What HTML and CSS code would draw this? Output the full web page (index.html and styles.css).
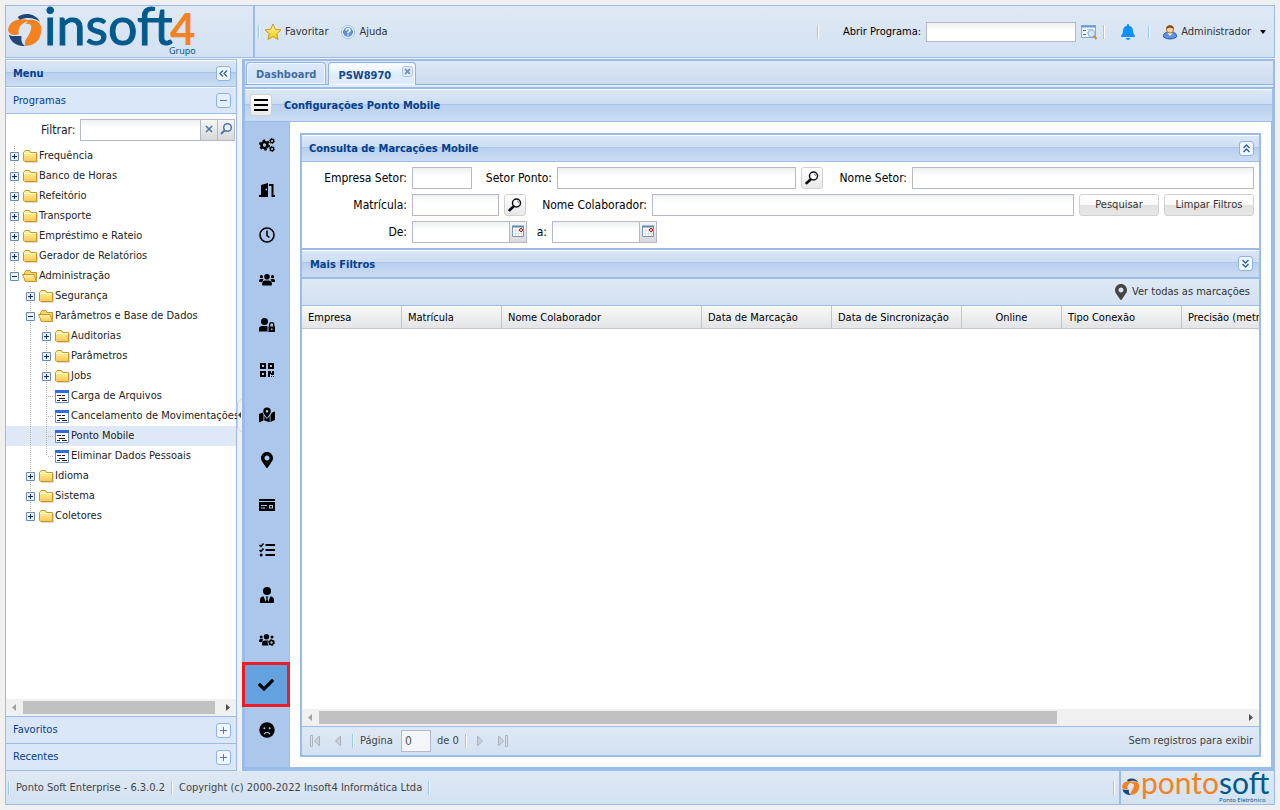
FILE: index.html
```html
<!DOCTYPE html>
<html lang="pt-BR">
<head>
<meta charset="utf-8">
<title>Ponto Soft Enterprise</title>
<link rel="stylesheet" href="styles.css">
</head>
<body>
<svg class="defs" aria-hidden="true">
  <defs>
    <linearGradient id="g-folder" x1="0" y1="0" x2="0" y2="1"><stop offset="0" stop-color="#fff6a8"/><stop offset="1" stop-color="#fbc94f"/></linearGradient>
    <linearGradient id="g-star" x1="0" y1="0" x2="0" y2="1"><stop offset="0" stop-color="#fffbb0"/><stop offset="1" stop-color="#f5c800"/></linearGradient>
    <symbol id="folder" viewBox="1 0 16 16"><path d="M1.500 12.500V4.500L3 2.500H7.500L8.500 4.500H14.500V13.500H2.500Z" fill="url(#g-folder)" stroke="#c8962a"/><path d="M2 5.500H14" stroke="#fffbd0"/><path d="M3 14.500H15.500V5.500" fill="none" stroke="#c9c4b4" stroke-width=".6"/></symbol>
    <symbol id="folder-open" viewBox="1 0 16 16"><path d="M2.500 12.500V4.500L4 2.500H8L9 4.500H14.500V13.500" fill="#f5d469" stroke="#c8962a"/><path d="M.500 6.500H12L14.500 13.500H3.500Z" fill="url(#g-folder)" stroke="#c8962a"/></symbol>
    <symbol id="leaf" viewBox="1 0 16 16"><path d="M1.500 2.500H14.500V14.500H1.500Z" fill="#fff" stroke="#6a8fc6"/><path d="M1 2H15V5H1Z" fill="#2f6ae0"/><path d="M3 7.500H7M8 7.500H11M5 10.500H11M3 12.500H6M8 12.500H13" stroke="#222"/></symbol>
    <symbol id="plus" viewBox="0 0 16 20"><path d="M3.500 6.500H11.500V14.500H3.500Z" fill="#eaf1fa" stroke="#6d89ad"/><path d="M5 10.500H10M7.500 8V13" stroke="#0b3068"/></symbol>
    <symbol id="minus" viewBox="0 0 16 20"><path d="M3.500 6.500H11.500V14.500H3.500Z" fill="#eaf1fa" stroke="#6d89ad"/><path d="M5 10.500H10" stroke="#0b3068"/></symbol>
    <symbol id="t-plus" viewBox="0 0 15 15"><rect x=".5" y=".5" width="14" height="14" rx="2.500" fill="#f1f7ff" stroke="#8db2e3"/><path d="M4 7.500H11M7.500 4V11" stroke="#4a7ebb"/></symbol>
    <symbol id="t-minus" viewBox="0 0 15 15"><rect x=".5" y=".5" width="14" height="14" rx="2.500" fill="#e4f0ff" stroke="#8db2e3"/><path d="M4 7.500H11" stroke="#4a7ebb"/></symbol>
    <symbol id="t-left" viewBox="0 0 15 15"><rect x=".5" y=".5" width="14" height="14" rx="2.500" fill="#f1f7ff" stroke="#8db2e3"/><path d="M7 4.500L4 7.500L7 10.500M11 4.500L8 7.500L11 10.500" fill="none" stroke="#2c5f9e" stroke-width="1.200"/></symbol>
    <symbol id="t-up" viewBox="0 0 15 15"><rect x=".5" y=".5" width="14" height="14" rx="2.500" fill="#f1f7ff" stroke="#8db2e3"/><path d="M4.500 7L7.500 4L10.500 7M4.500 11L7.500 8L10.500 11" fill="none" stroke="#2c5f9e" stroke-width="1.400"/></symbol>
    <symbol id="t-down" viewBox="0 0 15 15"><rect x=".5" y=".5" width="14" height="14" rx="2.500" fill="#f1f7ff" stroke="#8db2e3"/><path d="M4.500 4L7.500 7L10.500 4M4.500 8L7.500 11L10.500 8" fill="none" stroke="#2c5f9e" stroke-width="1.400"/></symbol>
    <symbol id="lens" viewBox="0 0 16 16"><circle cx="9.500" cy="6" r="4" fill="#fff" stroke="#111" stroke-width="1.500"/><path d="M10 3.800Q11.600 4.200 11.500 6" fill="none" stroke="#777"/><path d="M6.500 9.500L2.500 13.200" stroke="#111" stroke-width="2.600" stroke-linecap="round"/></symbol>
    <symbol id="calendar" viewBox="0 0 17 20"><path d="M2.500 4.500H13.500V14.500H2.500Z" fill="#fff" stroke="#7796bd"/><path d="M2 4.500H14" stroke="#5f86b8" stroke-width="2"/><path d="M5.500 7V14M8.500 7V14M11.500 10V14M4 8.500H9M4 11.500H13" stroke="#ddd"/><circle cx="11" cy="8" r="1.500" fill="#fff" stroke="#a00"/></symbol>
    <symbol id="pin" viewBox="0 0 384 512"><path d="M172.268 501.670C26.970 291.031 0 269.413 0 192 0 85.961 85.961 0 192 0s192 85.961 192 192c0 77.413-26.970 99.031-172.268 309.670-9.535 13.774-29.930 13.773-39.464 0zM192 272c44.183 0 80-35.817 80-80s-35.817-80-80-80-80 35.817-80 80 35.817 80 80 80z"/></symbol>
    <symbol id="mark" viewBox="0 0 36 36"><path d="M22 7C32 6 36 14 34 20C33 28 28 33 18 34C15 28 23 24 24 15C24 12 23 11 18 11Z" fill="#f58220"/><path d="M0 18C1 8 10 4 24 8C15 9 10 13 11 22C6 23 2 23 0 18Z" fill="#f58220"/><path d="M10 4C17 -1 28 0 33 9C27 5 20 4 12 7Z" fill="#1f4677"/><path d="M1 22C5 25 10 23 14 24C13 29 15 33 18 34C9 34 2 30 1 22Z" fill="#1f4677"/></symbol>
  </defs>
</svg>

<div class="app">
  <header class="top">
    <div class="brand">
      <svg width="196" height="51" viewBox="0 0 196 51" role="img" aria-label="insoft4 Grupo">
        <use href="#mark" x="2" y="7" width="35" height="35"/>
        <text x="38" y="39" class="logo-blue logo-big">insoft</text>
        <text x="164" y="39" class="logo-orange logo-four">4</text>
        <text x="163" y="48" class="logo-blue logo-small">Grupo</text>
      </svg>
    </div>
    <div class="toolbar">
      <i class="sep"></i>
      <button class="tool star" type="button"><svg width="18" height="18" viewBox="0 0 18 18"><path d="M9 1L11.300 6.300L17 6.900L12.800 10.700L14 16.500L9 13.500L4 16.500L5.200 10.700L1 6.900L6.700 6.300Z" fill="url(#g-star)" stroke="#c99a1c"/></svg>Favoritar</button>
      <button class="tool help" type="button"><svg width="16" height="16" viewBox="0 0 16 16"><circle cx="8" cy="8" r="6.500" fill="#fff" stroke="#9bb8dc"/><circle cx="8" cy="8" r="5" fill="#5f92d2"/><path d="M6 6.500Q6 4.800 8 4.800Q10 4.800 10 6.500Q10 7.500 8 8.300V9.300M8 10.300V11.500" fill="none" stroke="#fff" stroke-width="1.400"/></svg>Ajuda</button>
      <span class="grow"></span>
      <i class="sep"></i>
      <label class="open-label" for="open">Abrir Programa:</label>
      <input id="open" class="field open-field" type="text">
      <button class="icon-btn" type="button" aria-label="Localizar programa"><svg width="17" height="16" viewBox="0 0 17 16"><path d="M.500 1.500H14.500V13.500H.500Z" fill="#edf4fc" stroke="#86a9d3"/><path d="M0 2.500H15" stroke="#6f9cd0" stroke-width="2"/><path d="M2 6.500H5M2 10.500H5" stroke="#3c6fc0"/><path d="M6 5.500H12M6 8.500H8" stroke="#b8cde6"/><circle cx="10.500" cy="9.500" r="3.500" fill="#d3e7f8" stroke="#93b4d8"/><path d="M13 12L15.500 15" stroke="#c58b4b" stroke-width="2"/></svg></button>
      <i class="sep"></i>
      <button class="icon-btn bell" type="button" aria-label="Notificações"><svg width="16" height="16" viewBox="0 0 448 512"><path fill="#0a90ff" d="M224 512c35.320 0 63.970-28.650 63.970-64H160.030c0 35.350 28.650 64 63.970 64zm215.390-149.710c-19.320-20.760-55.470-51.990-55.470-154.290 0-77.700-54.480-139.900-127.940-155.160V32c0-17.670-14.320-32-31.980-32s-31.980 14.330-31.980 32v20.840C118.560 68.100 64.080 130.300 64.080 208c0 102.300-36.150 133.530-55.470 154.290-6 6.450-8.660 14.160-8.610 21.710.110 16.400 12.980 32 32.100 32h383.800c19.120 0 32-15.600 32.100-32 .050-7.550-2.610-15.270-8.610-21.710z"/></svg></button>
      <i class="sep"></i>
      <button class="tool user" type="button"><svg width="16" height="16" viewBox="0 0 16 16"><path d="M1.500 13Q1 9 5 8.500H11Q15 9 14.500 13Q12 15 8 15Q4 15 1.500 13Z" fill="#5b93e6" stroke="#2a5db0"/><path d="M5 8.500L8 12L11 8.500Z" fill="#fff"/><circle cx="8" cy="5.500" r="3.600" fill="#f8d0a0" stroke="#a86a32"/><path d="M4.300 5Q4 1.300 8 1.300Q12 1.300 11.700 5Q10 3.500 7 3.700Z" fill="#8a4b17"/></svg>Administrador<svg class="caret" width="6" height="4" viewBox="0 0 6 4"><path d="M0 0H6L3 4Z"/></svg></button>
    </div>
  </header>

  <div class="middle">
    <aside class="menu">
      <div class="bar menu-title"><h2>Menu</h2><button class="mini" type="button" aria-label="Recolher"><svg width="15" height="15"><use href="#t-left"/></svg></button></div>
      <div class="acc"><span>Programas</span><button class="mini" type="button" aria-label="Recolher Programas"><svg width="15" height="15"><use href="#t-minus"/></svg></button></div>
      <div class="menu-body">
        <div class="filter">
          <label for="filter">Filtrar:</label>
          <input id="filter" class="field" type="text"><button class="trigger" type="button" aria-label="Limpar"><svg width="17" height="20" viewBox="0 0 17 20"><path d="M5 6L11 12M11 6L5 12" stroke="#4a74ac" stroke-width="1.500"/></svg></button><button class="trigger" type="button" aria-label="Buscar"><svg width="17" height="20" viewBox="0 0 17 20"><circle cx="9.500" cy="7.500" r="3.800" fill="#eef5ff" stroke="#4a74ac" stroke-width="1.500"/><path d="M6.500 10.500L3 14" stroke="#4a74ac" stroke-width="2"/></svg></button>
        </div>
        <ul class="tree">
          <li><svg class="elbow line"><use href="#plus"/></svg><svg class="ico"><use href="#folder"/></svg>Frequência</li>
          <li><svg class="elbow line"><use href="#plus"/></svg><svg class="ico"><use href="#folder"/></svg>Banco de Horas</li>
          <li><svg class="elbow line"><use href="#plus"/></svg><svg class="ico"><use href="#folder"/></svg>Refeitório</li>
          <li><svg class="elbow line"><use href="#plus"/></svg><svg class="ico"><use href="#folder"/></svg>Transporte</li>
          <li><svg class="elbow line"><use href="#plus"/></svg><svg class="ico"><use href="#folder"/></svg>Empréstimo e Rateio</li>
          <li><svg class="elbow line"><use href="#plus"/></svg><svg class="ico"><use href="#folder"/></svg>Gerador de Relatórios</li>
          <li><svg class="elbow end"><use href="#minus"/></svg><svg class="ico"><use href="#folder-open"/></svg>Administração</li>
          <li><i class="cell"></i><svg class="elbow line"><use href="#plus"/></svg><svg class="ico"><use href="#folder"/></svg>Segurança</li>
          <li><i class="cell"></i><svg class="elbow line"><use href="#minus"/></svg><svg class="ico"><use href="#folder-open"/></svg>Parâmetros e Base de Dados</li>
          <li><i class="cell"></i><i class="cell line"></i><svg class="elbow line"><use href="#plus"/></svg><svg class="ico"><use href="#folder"/></svg>Auditorias</li>
          <li><i class="cell"></i><i class="cell line"></i><svg class="elbow line"><use href="#plus"/></svg><svg class="ico"><use href="#folder"/></svg>Parâmetros</li>
          <li><i class="cell"></i><i class="cell line"></i><svg class="elbow line"><use href="#plus"/></svg><svg class="ico"><use href="#folder"/></svg>Jobs</li>
          <li><i class="cell"></i><i class="cell line"></i><i class="cell line tee"></i><svg class="ico"><use href="#leaf"/></svg>Carga de Arquivos</li>
          <li><i class="cell"></i><i class="cell line"></i><i class="cell line tee"></i><svg class="ico"><use href="#leaf"/></svg>Cancelamento de Movimentações</li>
          <li class="selected"><i class="cell"></i><i class="cell line"></i><i class="cell line tee"></i><svg class="ico"><use href="#leaf"/></svg>Ponto Mobile</li>
          <li><i class="cell"></i><i class="cell line"></i><i class="cell end tee"></i><svg class="ico"><use href="#leaf"/></svg>Eliminar Dados Pessoais</li>
          <li><i class="cell"></i><svg class="elbow line"><use href="#plus"/></svg><svg class="ico"><use href="#folder"/></svg>Idioma</li>
          <li><i class="cell"></i><svg class="elbow line"><use href="#plus"/></svg><svg class="ico"><use href="#folder"/></svg>Sistema</li>
          <li><i class="cell"></i><svg class="elbow end"><use href="#plus"/></svg><svg class="ico"><use href="#folder"/></svg>Coletores</li>
        </ul>
        <div class="scroll"><svg width="17" height="17" viewBox="0 0 17 17"><path d="M10 5V12L6 8.500Z" fill="#a3a3a3"/></svg><div class="track"><div class="thumb full"></div></div><svg width="17" height="17" viewBox="0 0 17 17"><path d="M7 5V12L11 8.500Z" fill="#505050"/></svg></div>
      </div>
      <div class="acc closed"><span>Favoritos</span><button class="mini" type="button" aria-label="Expandir Favoritos"><svg width="15" height="15"><use href="#t-plus"/></svg></button></div>
      <div class="acc closed"><span>Recentes</span><button class="mini" type="button" aria-label="Expandir Recentes"><svg width="15" height="15"><use href="#t-plus"/></svg></button></div>
    </aside>

    <div class="splitter"><svg width="5" height="35" viewBox="0 0 5 35"><path d="M5 .500L.500 5V30L5 34.500" fill="#f0f0f0" stroke="#d0d0d0"/><path d="M4 14L1 17L4 20Z" fill="#444"/></svg></div>

    <main class="work">
      <nav class="tabs">
        <button class="tab" type="button">Dashboard</button>
        <button class="tab active" type="button">PSW8970<svg class="close" width="11" height="11" viewBox="0 0 11 11"><rect x=".5" y=".5" width="10" height="10" rx="2" fill="#e2eefc" stroke="#a9c6ea"/><path d="M3 3L8 8M8 3L3 8" stroke="#7a95b8" stroke-width="1.800"/></svg></button>
      </nav>
      <div class="strip"></div>
      <div class="bar page-title">
        <button class="square" type="button" aria-label="Alternar menu"><svg width="16" height="16" viewBox="0 0 16 16"><path d="M1 3H15M1 8H15M1 13H15" stroke="#000" stroke-width="2"/></svg></button>
        <h1>Configurações Ponto Mobile</h1>
      </div>
      <div class="page">
        <nav class="rail">
          <button type="button" aria-label="Configurações"><svg viewBox="0 0 16 16"><circle cx="5.500" cy="8" r="3" fill="none" stroke="#000" stroke-width="2.600"/><circle cx="5.500" cy="8" r="4.800" fill="none" stroke="#000" stroke-width="1.500" stroke-dasharray="2.500 2.530"/><circle cx="13" cy="4" r="1.700" fill="none" stroke="#000" stroke-width="1.400"/><circle cx="13" cy="4" r="2.600" fill="none" stroke="#000" stroke-width=".8" stroke-dasharray="1.300 1.400"/><circle cx="13" cy="12" r="1.700" fill="none" stroke="#000" stroke-width="1.400"/><circle cx="13" cy="12" r="2.600" fill="none" stroke="#000" stroke-width=".8" stroke-dasharray="1.300 1.400"/></svg></button>
          <button type="button" aria-label="Porta"><svg viewBox="0 0 16 16"><path fill-rule="evenodd" d="M0 13H2V3L9 1V15H0ZM6.500 7.500A.8 1 0 1 0 8.100 7.500A.8 1 0 1 0 6.500 7.500Z"/><path d="M10 3H13.500V14H16" fill="none" stroke="#000" stroke-width="2"/></svg></button>
          <button type="button" aria-label="Horários"><svg viewBox="0 0 16 16"><circle cx="8" cy="8" r="7" fill="none" stroke="#000" stroke-width="1.600"/><path d="M8 3.500V8.500L10.500 10.500" fill="none" stroke="#000" stroke-width="1.600"/></svg></button>
          <button type="button" aria-label="Grupos"><svg viewBox="0 0 16 16"><circle cx="2.400" cy="4.700" r="1.600"/><circle cx="13.600" cy="4.700" r="1.600"/><circle cx="8" cy="4.800" r="2.800"/><path d="M0 10V8.500Q0 7 1.600 7H3.500Q4.300 7 4.600 7.500Q3.300 8.600 3.200 10ZM16 10V8.500Q16 7 14.400 7H12.500Q11.700 7 11.400 7.500Q12.700 8.600 12.800 10ZM3.200 13.500V11.500Q3.200 8.500 6.200 8.500H9.800Q12.800 8.500 12.800 11.500V13.500Z"/></svg></button>
          <button type="button" aria-label="Bloqueio de usuário"><svg viewBox="0 0 16 16"><circle cx="5.500" cy="4.500" r="3.500"/><path d="M0 14.500V12Q0 9 3 9H8.500V14.500Z"/><path fill-rule="evenodd" d="M9.500 9.500H16V15H9.500ZM12 11.500V13H13.500V11.500Z"/><path d="M10.700 10V7.500Q10.700 5.700 12.700 5.700Q14.700 5.700 14.700 7.500V10" fill="none" stroke="#000" stroke-width="1.300"/></svg></button>
          <button type="button" aria-label="QR Code"><svg viewBox="0 0 16 16"><path d="M2 2H6V6H2ZM10 2H14V6H10ZM2 10H6V14H2Z" fill="none" stroke="#000" stroke-width="2"/><path d="M9 9H12V11H13V9H15V13H12V12H11V15H9ZM12 14H13V15H12ZM14 14H15V15H14Z"/></svg></button>
          <button type="button" aria-label="Mapa"><svg viewBox="0 0 16 16"><path fill-rule="evenodd" d="M8 .500A3.800 3.800 0 0 1 11.800 4.300Q11.800 6.300 8 11Q4.200 6.300 4.200 4.300A3.800 3.800 0 0 1 8 .500ZM8 3A1.300 1.300 0 1 0 8 5.600A1.300 1.300 0 1 0 8 3Z"/><path d="M0 7L3.500 5.500L4.500 7.500V13.500L0 15.500ZM5.300 9L8 12L10.700 9V15.200L5.300 13.500ZM11.500 8L13 5.500L16 4.500V13L11.500 15Z"/></svg></button>
          <button type="button" aria-label="Localização"><svg><use href="#pin"/></svg></button>
          <button type="button" aria-label="Cartão"><svg viewBox="0 0 16 16"><path fill-rule="evenodd" d="M0 2H16V14H0ZM0 4V5H16V4ZM2 8V9H8V8ZM2 10.500V11.500H6V10.500ZM10 8V11.500H14V8Z"/><path d="M11 9H13V10.500H11Z"/></svg></button>
          <button type="button" aria-label="Tarefas"><svg viewBox="0 0 16 16"><path d="M6.500 3H16M6.500 8H16M6.500 13H16" stroke="#000" stroke-width="2"/><path d="M.500 3L2 4.500L4.500 1.500M.500 8L2 9.500L4.500 6.500" fill="none" stroke="#000" stroke-width="1.500"/><circle cx="2.200" cy="13" r="1.500"/></svg></button>
          <button type="button" aria-label="Gestor"><svg viewBox="0 0 16 16"><circle cx="8" cy="4" r="4"/><path d="M1 16V13Q1 9.800 4.500 9.200L6.800 15L7.500 11.500L6.700 9.500H9.300L8.500 11.500L9.200 15L11.500 9.200Q15 9.800 15 13V16Z"/></svg></button>
          <button type="button" aria-label="Configurar grupos"><svg viewBox="0 0 16 16"><circle cx="2.200" cy="5" r="1.500"/><circle cx="13" cy="5" r="1.500"/><circle cx="7.500" cy="4.800" r="2.700"/><path d="M0 10V8.500Q0 7 1.500 7H3.500L4.300 7.500Q3.200 8.600 3 10ZM3 13.500V11.500Q3 8.500 6 8.500H9L8.500 11L9.500 13.500Z"/><circle cx="12.500" cy="10.500" r="2" fill="none" stroke="#000" stroke-width="1.600"/><circle cx="12.500" cy="10.500" r="3" fill="none" stroke="#000" stroke-dasharray="1.600 1.540"/></svg></button>
          <button class="current" type="button" aria-label="Marcações"><svg viewBox="0 0 512 512"><path d="M173.898 439.404l-166.400-166.400c-9.997-9.997-9.997-26.206 0-36.204l36.203-36.204c9.997-9.998 26.207-9.998 36.204 0L192 312.690 432.095 72.596c9.997-9.997 26.207-9.997 36.204 0l36.203 36.204c9.997 9.997 9.997 26.206 0 36.204l-294.400 294.401c-9.998 9.997-26.207 9.997-36.204-.001z"/></svg></button>
          <button type="button" aria-label="Ocorrências"><svg viewBox="0 0 16 16"><circle cx="8" cy="8" r="7.700"/><circle cx="5.400" cy="6.300" r="1" fill="#abc7ec"/><circle cx="10.600" cy="6.300" r="1" fill="#abc7ec"/><path d="M5 12Q8 8.500 11 12" fill="none" stroke="#abc7ec" stroke-width="1.200"/></svg></button>
        </nav>

        <section class="panel">
          <div class="bar panel-title"><h2>Consulta de Marcações Mobile</h2><button class="mini" type="button" aria-label="Recolher consulta"><svg width="15" height="15"><use href="#t-up"/></svg></button></div>
          <form class="query">
            <div class="row">
              <label class="l-first" for="f1">Empresa Setor:</label><input id="f1" class="field w-60" type="text">
              <label class="l-75" for="f2">Setor Ponto:</label><input id="f2" class="field w-239" type="text">
              <button class="square" type="button" aria-label="Buscar setor"><svg width="16" height="16"><use href="#lens"/></svg></button>
              <label class="l-79" for="f3">Nome Setor:</label><input id="f3" class="field grow" type="text">
            </div>
            <div class="row">
              <label class="l-first" for="f4">Matrícula:</label><input id="f4" class="field w-87" type="text">
              <button class="square" type="button" aria-label="Buscar matrícula"><svg width="16" height="16"><use href="#lens"/></svg></button>
              <label class="l-116" for="f5">Nome Colaborador:</label><input id="f5" class="field grow" type="text">
              <button class="btn w-80" type="button">Pesquisar</button>
              <button class="btn w-90" type="button">Limpar Filtros</button>
            </div>
            <div class="row">
              <label class="l-first" for="f6">De:</label><div class="date w-115"><input id="f6" class="field grow" type="text"><button class="trigger" type="button" aria-label="Calendário inicial"><svg width="17" height="20"><use href="#calendar"/></svg></button></div>
              <label class="l-15" for="f7">a:</label><div class="date w-105"><input id="f7" class="field grow" type="text"><button class="trigger" type="button" aria-label="Calendário final"><svg width="17" height="20"><use href="#calendar"/></svg></button></div>
            </div>
          </form>
          <div class="bar more"><h2>Mais Filtros</h2><button class="mini" type="button" aria-label="Expandir filtros"><svg width="15" height="15"><use href="#t-down"/></svg></button></div>
          <div class="grid-tools"><button class="tool" type="button"><svg width="16" height="16" fill="#444"><use href="#pin"/></svg>Ver todas as marcações</button></div>
          <div class="grid">
            <table>
              <colgroup><col class="c-100"><col class="c-100"><col class="c-200"><col class="c-130"><col class="c-130"><col class="c-100"><col class="c-120"><col class="c-120"></colgroup>
              <thead><tr><th>Empresa</th><th>Matrícula</th><th>Nome Colaborador</th><th>Data de Marcação</th><th>Data de Sincronização</th><th class="mid">Online</th><th>Tipo Conexão</th><th>Precisão (metros)</th></tr></thead>
            </table>
          </div>
          <div class="scroll"><svg width="17" height="17" viewBox="0 0 17 17"><path d="M10 5V12L6 8.500Z" fill="#a3a3a3"/></svg><div class="track"><div class="thumb"></div></div><svg width="17" height="17" viewBox="0 0 17 17"><path d="M7 5V12L11 8.500Z" fill="#505050"/></svg></div>
          <div class="pager">
            <button type="button" aria-label="Primeira" disabled><svg viewBox="0 0 16 16"><path d="M3.500 2.500H5.500V13.500H3.500Z" fill="#dde3ea" stroke="#a9b2bd"/><path d="M12.500 3V13L7.500 8Z" fill="#c9d1da" stroke="#a9b2bd"/></svg></button>
            <button type="button" aria-label="Anterior" disabled><svg viewBox="0 0 16 16"><path d="M10.500 3V13L5.500 8Z" fill="#c9d1da" stroke="#a9b2bd"/></svg></button>
            <i class="sep"></i>
            <label for="pg">Página</label><input id="pg" class="field" type="text" value="0"><span>de 0</span>
            <i class="sep"></i>
            <button type="button" aria-label="Próxima" disabled><svg viewBox="0 0 16 16"><path d="M5.500 3V13L10.500 8Z" fill="#c9d1da" stroke="#a9b2bd"/></svg></button>
            <button type="button" aria-label="Última" disabled><svg viewBox="0 0 16 16"><path d="M3.500 3V13L8.500 8Z" fill="#c9d1da" stroke="#a9b2bd"/><path d="M10.500 2.500H12.500V13.500H10.500Z" fill="#dde3ea" stroke="#a9b2bd"/></svg></button>
            <span class="grow"></span>
            <span>Sem registros para exibir</span>
          </div>
        </section>
      </div>
    </main>
  </div>

  <footer class="foot">
    <div class="status">
      <i class="sep"></i><span>Ponto Soft Enterprise - 6.3.0.2</span><i class="sep"></i><span>Copyright (c) 2000-2022 Insoft4 Informática Ltda</span><i class="sep"></i><span class="grow"></span><i class="sep"></i>
    </div>
    <div class="vendor">
      <svg width="152" height="32" viewBox="0 0 152 32" role="img" aria-label="pontosoft Ponto Eletrônico">
        <use href="#mark" x="1" y="7" width="18" height="18"/>
        <text x="20" y="23" class="logo-orange logo-mid">ponto<tspan class="logo-blue">soft</tspan></text>
        <text x="98" y="31" class="logo-blue logo-tiny">Ponto Eletrônico</text>
      </svg>
    </div>
  </footer>
</div>
</body>
</html>
```
FILE: styles.css
```css
:root {
  --line: #99bce8;
  --title: #04408c;
  --ui: "DejaVu Sans Condensed", "DejaVu Sans", sans-serif;
}
* { box-sizing: border-box; }
body { margin: 0; background: #f0f0f0; font: 11px/14px var(--ui); color: #222; }
button { margin: 0; padding: 0; border: 0; background: none; font: inherit; color: inherit; }
h1, h2, ul { margin: 0; padding: 0; }
h1, h2 { padding-top: 2px; font: bold 11px/14px var(--ui); color: var(--title); }
svg { display: block; flex: none; }
symbol { overflow: visible; }
.defs { position: absolute; width: 0; height: 0; }
.grow { flex: 1; min-width: 0; }
.app { display: flex; flex-direction: column; height: 100vh; padding: 5px; }

.sep { flex: none; width: 2px; height: 14px; background: #98c8ff; border-right: 1px solid #fff; }
.field { height: 22px; min-width: 0; margin: 0; padding: 0 4px; border: 1px solid #b5b8c8; background: linear-gradient(#edf0f1, #fff 8px); font: 12px/16px var(--ui); color: #000; border-radius: 0; }
.tool { display: flex; align-items: center; gap: 3px; color: #333; }
.mini { flex: none; width: 15px; height: 15px; }

.top { display: flex; height: 53px; border: 1px solid var(--line); background: linear-gradient(#dfe9f5, #d3e1f1); }
.brand { width: 249px; border-right: 2px solid var(--line); }
.toolbar { flex: 1; display: flex; align-items: center; padding: 0 8px 0 3px; }
.toolbar .star { margin-left: 4px; }
.toolbar .help { margin-left: 12px; }
.open-label { margin: 0 5px 0 24px; color: #000; }
.open-field { width: 150px; height: 20px; }
.icon-btn { margin: 0 5px; }
.icon-btn.bell { margin: 0 12px 0 15px; }
.tool.user { margin-left: 12px; }
.caret { margin-left: 6px; }
.logo-blue { fill: #005a8b; }
.logo-orange { fill: #f58220; }
.logo-big { font: 52px Lato, sans-serif; stroke: #005a8b; }
.logo-four { font: bold 44px Lato, sans-serif; }
.logo-mid { font: 30px Lato, sans-serif; }
.logo-small { font: 9px "Noto Sans", sans-serif; }
.logo-tiny { font: 6px "Noto Sans", sans-serif; }

.middle { flex: 1; display: flex; min-height: 0; padding-top: 1px; }
.bar { flex: none; display: flex; align-items: center; justify-content: space-between; border-bottom: 1px solid var(--line); background: linear-gradient(#fff 1px, #dae7f6 1px, #cddef3 46%, #abc7ec 46%, #abc7ec 50%, #b8cfee 50%, #cbddf3); }

.menu { width: 232px; display: flex; flex-direction: column; border: 1px solid var(--line); background: #fff; }
.menu-title { height: 27px; padding: 0 5px 0 7px; }
.acc { flex: none; display: flex; align-items: center; justify-content: space-between; height: 27px; padding: 0 5px 0 7px; border-bottom: 1px solid var(--line); background: #d9e7f8; border-top: 1px solid #f3f8fe; color: var(--title); }
.acc.closed { border-top: 1px solid var(--line); border-bottom: 0; }
.menu-body { flex: 1; display: flex; flex-direction: column; min-height: 0; }
.filter { display: flex; align-items: center; padding: 5px 0 5px 35px; font-size: 12px; }
.filter label { margin-right: 5px; }
.filter .field { width: 121px; }
.trigger { flex: none; width: 17px; height: 22px; border-right: 1px solid #b5b8c8; border-bottom: 1px solid #b5b8c8; border-top: 1px solid #b5b8c8; background: linear-gradient(#f5f5f5, #d8d8d8); }
.tree { flex: 1; list-style: none; }
.tree li { display: flex; align-items: center; height: 20px; white-space: nowrap; padding-left: 1px; }
.tree .selected { background: #dfe8f6; }
.cell, .elbow { flex: none; width: 16px; height: 20px; }
.ico { width: 16px; height: 16px; overflow: visible; }
.line { background: repeating-linear-gradient(#b0b0b0 0 1px, transparent 1px 2px) 7px 0 / 1px 100% no-repeat; }
.end { background: repeating-linear-gradient(#b0b0b0 0 1px, transparent 1px 2px) 7px 0 / 1px 10px no-repeat; }
.line.tee { background: repeating-linear-gradient(#b0b0b0 0 1px, transparent 1px 2px) 7px 0 / 1px 100% no-repeat, repeating-linear-gradient(90deg, #b0b0b0 0 1px, transparent 1px 2px) 9px 10px / 6px 1px no-repeat; }
.end.tee { background: repeating-linear-gradient(#b0b0b0 0 1px, transparent 1px 2px) 7px 0 / 1px 10px no-repeat, repeating-linear-gradient(90deg, #b0b0b0 0 1px, transparent 1px 2px) 9px 10px / 6px 1px no-repeat; }
.scroll { flex: none; display: flex; height: 17px; background: #f0f0f0; }
.track { flex: 1; padding: 2px 0; }
.thumb { width: 80%; height: 13px; background: #c1c1c1; }
.thumb.full { width: 98%; }

.splitter { flex: none; width: 5px; display: flex; align-items: center; }

.work { flex: 1; min-width: 0; display: flex; flex-direction: column; border: 2px solid var(--line); border-left-width: 3px; }
.tabs { flex: none; display: flex; align-items: flex-end; gap: 2px; height: 24px; padding-left: 1px; background: linear-gradient(#dde8f5, #cbdbef); border-bottom: 1px solid #8db2e3; }
.tab { position: relative; height: 22px; padding: 3px 9px 0; border: 1px solid #8db2e3; border-bottom: 0; border-radius: 4px 4px 0 0; background: linear-gradient(#dceaf9, #cfe1f8); font-weight: bold; color: #416da3; box-shadow: inset 0 0 0 1px #f0f6fd; }
.tab.active { height: 23px; margin-bottom: -1px; padding-right: 24px; background: linear-gradient(#fff, #deecfd 12px); color: #15498b; }
.close { position: absolute; top: 3px; right: 2px; }
.strip { flex: none; height: 2px; background: #deecfd; }
.page-title { height: 35px; padding: 0 7px 0 5px; border-top: 2px solid var(--line); border-bottom-width: 1px; justify-content: flex-start; gap: 12px; border-right: 1px solid var(--line); }
.square { flex: none; width: 22px; height: 22px; display: flex; align-items: center; justify-content: center; border: 1px solid #d1d1d1; border-radius: 3px; background: linear-gradient(#fff, #e8e8e8); }
.page { flex: 1; min-height: 0; display: flex; background: #fff; border-right: 2px solid var(--line); border-bottom: 2px solid var(--line); }
.rail { flex: none; width: 45px; background: #abc7ec; border-right: 1px solid var(--line); }
.rail button { display: flex; align-items: center; justify-content: center; width: 44px; height: 45px; }
.rail svg { width: 16px; height: 16px; }
.rail .current { width: 48px; margin-left: -3px; border: 3px solid #ed1c24; background: #63a2de; position: relative; }

.panel { flex: 1; min-width: 0; display: flex; flex-direction: column; margin: 11px 10px 10px; border: 2px solid var(--line); }
.panel-title { height: 27px; padding: 0 5px 0 7px; }
.query { padding: 5px; display: flex; flex-direction: column; gap: 5px; height: 86px; flex: none; font-size: 12px; color: #000; }
.row { display: flex; align-items: center; gap: 5px; height: 22px; }
.row label { flex: none; text-align: right; white-space: nowrap; }
.l-first { width: 100px; }
.l-75 { width: 75px; }
.l-79 { width: 79px; }
.l-116 { width: 116px; }
.l-15 { width: 15px; }
.w-60 { width: 60px; }
.w-239 { width: 239px; }
.w-87 { width: 87px; }
.w-80 { width: 80px; }
.w-90 { width: 90px; }
.w-115 { width: 115px; }
.w-105 { width: 105px; }
.date { display: flex; }
.btn { flex: none; height: 22px; border: 1px solid #d1d1d1; border-radius: 3px; background: linear-gradient(#fff, #f9f9f9 48%, #e2e2e2 52%, #e7e7e7); color: #333; font-size: 11px; white-space: nowrap; }
.more { height: 31px; padding: 0 6px 0 8px; border-top: 2px solid var(--line); border-bottom-width: 2px; }
.grid-tools { flex: none; display: flex; align-items: center; justify-content: flex-end; height: 26px; padding-right: 9px; background: linear-gradient(#dfe9f5, #d3e1f1); }
.grid { flex: 1; min-height: 0; overflow: hidden; border-top: 1px solid var(--line); }
.grid table { width: 1000px; table-layout: fixed; border-collapse: separate; border-spacing: 0; }
.grid th { height: 23px; padding: 2px 6px 0; border-right: 1px solid #c5c5c5; border-bottom: 1px solid #c5c5c5; background: linear-gradient(#f9f9f9, #e3e4e6); font-weight: normal; text-align: left; white-space: nowrap; color: #000; }
.grid th.mid { text-align: center; }
.c-100 { width: 100px; }
.c-200 { width: 200px; }
.c-130 { width: 130px; }
.c-120 { width: 120px; }
.pager { flex: none; display: flex; align-items: center; height: 29px; padding: 0 6px 0 2px; border-top: 1px solid var(--line); background: linear-gradient(#dfe9f5, #d3e1f1); color: #444; }
.pager button { width: 22px; height: 22px; padding: 3px; margin-right: 1px; }
.pager button svg { width: 16px; height: 16px; }
.pager .sep { margin: 0 6px 0 2px; }
.pager .field { width: 30px; margin: 0 6px 0 8px; background: #f2f5f9; color: #555; padding: 0 3px; }
.pager .sep ~ .sep { margin: 0 2px 0 6px; }

.foot { flex: none; display: flex; height: 34px; border: 1px solid var(--line); border-top-width: 0; background: linear-gradient(#dfe9f5, #d3e1f1); color: #444; }
.status { flex: 1; display: flex; align-items: center; gap: 6px; padding: 0 4px 0 2px; }
.vendor { width: 155px; border-left: 2px solid var(--line); }
```
